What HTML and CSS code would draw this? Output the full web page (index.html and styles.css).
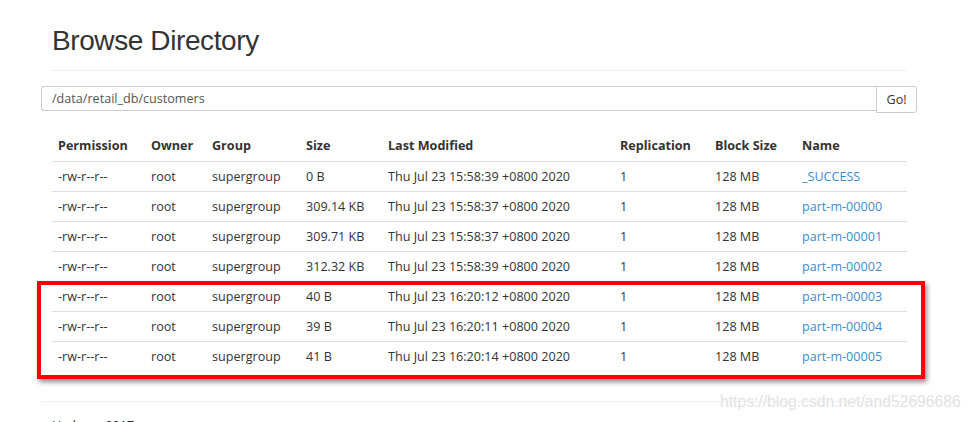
FILE: index.html
```html
<!DOCTYPE html>
<html lang="en">
<head>
  <meta charset="UTF-8">
  <title>Browsing HDFS</title>
  <link rel="stylesheet" href="styles.css">
</head>
<body>
  <div class="container">
    <div class="page-header">
      <h1>Browse Directory</h1>
    </div>

    <form class="dir-form" onsubmit="return false;">
      <input type="text" class="dir-input" value="/data/retail_db/customers">
      <button class="dir-go">Go!</button>
    </form>

    <table class="dir-table">
      <thead>
        <tr>
          <th class="c-perm">Permission</th>
          <th class="c-owner">Owner</th>
          <th class="c-group">Group</th>
          <th class="c-size">Size</th>
          <th class="c-mod">Last Modified</th>
          <th class="c-rep">Replication</th>
          <th class="c-block">Block Size</th>
          <th class="c-name">Name</th>
        </tr>
      </thead>
      <tbody>
        <tr><td>-rw-r--r--</td><td>root</td><td>supergroup</td><td>0 B</td><td>Thu Jul 23 15:58:39 +0800 2020</td><td>1</td><td>128 MB</td><td><a href="#">_SUCCESS</a></td></tr>
        <tr><td>-rw-r--r--</td><td>root</td><td>supergroup</td><td>309.14 KB</td><td>Thu Jul 23 15:58:37 +0800 2020</td><td>1</td><td>128 MB</td><td><a href="#">part-m-00000</a></td></tr>
        <tr><td>-rw-r--r--</td><td>root</td><td>supergroup</td><td>309.71 KB</td><td>Thu Jul 23 15:58:37 +0800 2020</td><td>1</td><td>128 MB</td><td><a href="#">part-m-00001</a></td></tr>
        <tr><td>-rw-r--r--</td><td>root</td><td>supergroup</td><td>312.32 KB</td><td>Thu Jul 23 15:58:39 +0800 2020</td><td>1</td><td>128 MB</td><td><a href="#">part-m-00002</a></td></tr>
        <tr><td>-rw-r--r--</td><td>root</td><td>supergroup</td><td>40 B</td><td>Thu Jul 23 16:20:12 +0800 2020</td><td>1</td><td>128 MB</td><td><a href="#">part-m-00003</a></td></tr>
        <tr><td>-rw-r--r--</td><td>root</td><td>supergroup</td><td>39 B</td><td>Thu Jul 23 16:20:11 +0800 2020</td><td>1</td><td>128 MB</td><td><a href="#">part-m-00004</a></td></tr>
        <tr><td>-rw-r--r--</td><td>root</td><td>supergroup</td><td>41 B</td><td>Thu Jul 23 16:20:14 +0800 2020</td><td>1</td><td>128 MB</td><td><a href="#">part-m-00005</a></td></tr>
      </tbody>
    </table>

    <hr class="footer-rule">
    <div class="footer">Hadoop, 2017.</div>
  </div>

  <!-- annotation drawn over the screenshot -->
  <div class="highlight"></div>
  <div class="watermark">https://blog.csdn.net/and52696686</div>
</body>
</html>
```

FILE: styles.css
```css
body {
  margin: 0;
  background: #ffffff;
  color: #333333;
  font-family: 'Open Sans', 'Noto Sans', sans-serif;
  font-size: 12.6px;
  overflow: hidden;
}

.container {
  width: 876px;
  margin-left: 41px;
}

.page-header {
  margin: 0 11px;
  padding-top: 23px;
  padding-bottom: 11px;
  border-bottom: 1px solid #eeeeee;
}

.page-header h1 {
  margin: 0;
  font-family: 'Liberation Sans', Arial, sans-serif;
  font-weight: 400;
  font-size: 28px;
  letter-spacing: -0.4px;
  line-height: 36px;
  color: #333333;
}

.dir-form {
  display: flex;
  margin-top: 15px;
}

.dir-input {
  flex: 1;
  height: 25px;
  box-sizing: border-box;
  border: 1px solid #cccccc;
  border-right: none;
  border-radius: 3px 0 0 3px;
  padding: 0 10px;
  font-family: 'Open Sans', 'Noto Sans', sans-serif;
  font-size: 12.6px;
  color: #555555;
  outline: none;
}

.dir-go {
  width: 41px;
  height: 27px;
  box-sizing: border-box;
  border: 1px solid #cccccc;
  border-radius: 0 3px 3px 0;
  background: #ffffff;
  font-family: 'Open Sans', 'Noto Sans', sans-serif;
  font-size: 12.6px;
  color: #333333;
  padding: 0;
}

.dir-table {
  margin: 18px 11px 0;
  width: 855px;
  border-collapse: collapse;
  table-layout: fixed;
}

.dir-table th,
.dir-table td {
  height: 30px;
  padding: 0 6px;
  text-align: left;
  white-space: nowrap;
  box-sizing: border-box;
}

.dir-table th {
  font-weight: 700;
  border-bottom: 1px solid #dddddd;
}

.dir-table td {
  border-top: 1px solid #dddddd;
}

.dir-table tbody tr:first-child td {
  border-top: none;
}

.c-perm { width: 93px; }
.c-owner { width: 61px; }
.c-group { width: 94px; }
.c-size { width: 82px; }
.c-mod { width: 232px; }
.c-rep { width: 95px; }
.c-block { width: 87px; }
.c-name { width: 111px; }

.dir-table a {
  color: #428bca;
  text-decoration: none;
}

.footer-rule {
  margin: 30px 0 0;
  border: none;
  border-top: 1px solid #eeeeee;
}

.footer {
  padding: 15px 11px;
  font-size: 12.6px;
}

.highlight {
  position: absolute;
  left: 37px;
  top: 281px;
  width: 888px;
  height: 98px;
  box-sizing: border-box;
  border: 4px solid #ff0000;
  box-shadow: 2px 3px 5px rgba(0, 0, 0, 0.45);
}

.watermark {
  position: absolute;
  left: 720px;
  top: 393px;
  font-family: 'Liberation Sans', Arial, sans-serif;
  font-size: 15.7px;
  color: #e2e2e2;
  text-shadow: 0 0 1px #ffffff, 0 0 1px #ffffff;
}
```
